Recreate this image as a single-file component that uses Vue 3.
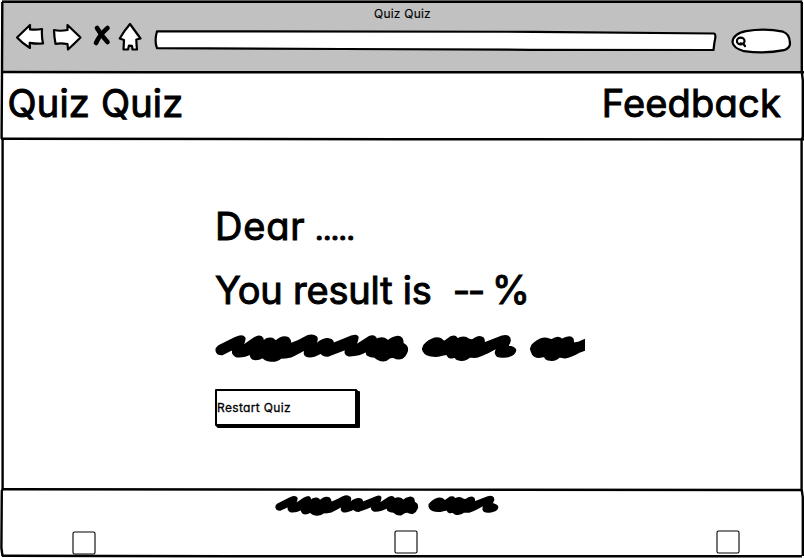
<script setup>
const wordOne =
  'M6 50Q5 43 12 38L62 13Q82 4 87 13Q89 19 80 35L88 35L116 16Q136 3 141 14Q143 19 139 30L155 17Q174 10 181 26Q203 5 219 14Q226 20 224 33Q255 22 276 9Q293 2 303 11Q306 16 300 30L307 31Q326 15 342 17Q354 18 352 32Q384 20 410 9Q429 3 426 14Q425 25 416 36L420 38L462 11Q479 3 483 19Q505 7 519 24Q530 13 548 10Q562 10 562 30Q578 37 574 52Q569 66 559 71Q548 74 536 67Q524 66 512 77Q496 81 480 67Q466 67 458 61L455 49Q430 64 402 63Q389 60 395 46L390 44Q350 60 338 64Q322 63 319 54Q291 70 276 65Q267 62 273 49L266 46Q240 60 228 66Q211 70 196 70Q186 80 168 79Q149 77 144 67Q126 77 115 73Q107 69 109 56Q86 68 66 66Q51 61 57 46L50 45L22 59Q8 60 6 50Z'
const wordTwo =
  'M627 50Q622 39 634 30Q657 10 676 16L687 26L710 10Q725 6 725 19Q747 6 760 18L772 21Q793 4 803 14Q807 20 804 31L862 9Q884 4 883 20Q882 29 873 35Q902 43 899 50Q896 63 874 66Q847 70 845 60Q841 54 849 44L841 41Q808 60 785 67Q773 68 764 66Q750 79 735 76Q723 75 723 66Q698 75 700 58Q685 60 669 64Q634 66 627 50Z'
const wordThree =
  'M951 50Q946 39 958 30Q982 10 1000 17L1010 20Q1031 7 1040 19Q1065 6 1071 15Q1074 20 1071 31L1090 28L1125 12V40L1090 53Q1068 66 1050 69L1033 66Q1020 79 1006 76Q992 76 991 64Q962 72 955 60Z'
const boxes = [0, 1, 2]
</script>

<template>
  <div class="window">
    <header class="chrome">
      <div class="title">Quiz Quiz</div>
      <div class="toolbar">
        <svg class="nav-icons" viewBox="0 0 130 32" width="130" height="32">
          <g class="ink">
            <path d="M1 15.5L14 3V7.5Q21 8 26 7Q25.5 15 27 21.5Q20 22 13.7 20.8L14 26Q6 21 1 15.5Z" />
            <path d="M38 8Q44 9.5 51.5 8L51.5 3L64.5 15.5Q58 22 52 27.5L51.5 22Q45 21 39.5 21.8Q38.2 15 38 8Z" />
            <path d="M114 2Q119 9 124.5 16.5L120.3 17.5Q120.5 23 121 27.5H116.5L116 23.8L113 23.6L112 27.5H107.5L108 18L103.7 16.5Q108 9 114 2Z" />
          </g>
          <path class="cross" d="M81 6Q85 13 91.5 20" />
          <path class="cross" d="M91.5 6Q83.5 13 80 21" />
        </svg>
        <svg class="address" viewBox="0 0 564 22" width="564" height="22">
          <path class="ink" d="M3 2.3L380 2.8L560 4.5Q562.5 5 560.5 13L559.5 21L376 20.8L188 20L3 19.2Q.2 12 3 2.3Z" />
        </svg>
        <svg class="search" viewBox="0 0 62 28" width="62" height="28">
          <path class="ink" d="M15 4.2Q34 1 52 4.7Q58.5 7 58.8 15Q60 21 53 23.2Q34 27 13 24.2Q2 21 1.5 15Q2 7 15 4.2Z" />
          <ellipse class="ink" cx="9.7" cy="14" rx="3.8" ry="3.3" />
          <path class="ink" d="M9.5 16.3L12.5 17L14 19" />
        </svg>
      </div>
    </header>

    <nav class="navbar">
      <span class="brand">Quiz Quiz</span>
      <span class="feedback">Feedback</span>
    </nav>

    <main class="result">
      <p class="greeting"><span class="dear">Dear</span><span class="dots">.....</span></p>
      <p class="score"><span class="lead">You result is</span><span class="dashes">--</span><span class="percent">%</span></p>
      <svg class="scribble" viewBox="0 0 1110 84" width="370" height="28">
        <path :d="wordOne" />
        <path :d="wordTwo" />
        <path :d="wordThree" />
      </svg>
      <button class="restart">Restart Quiz</button>
    </main>

    <footer class="footer">
      <svg class="scribble small" viewBox="0 0 908 84" width="224.4" height="20.8">
        <path :d="wordOne" />
        <path :d="wordTwo" />
      </svg>
      <div class="boxes">
        <svg v-for="i in boxes" :key="i" class="box" viewBox="0 0 24 24" width="24" height="24">
          <rect x="1" y="1" width="22" height="22" rx="1.5" />
        </svg>
      </div>
    </footer>

    <svg class="outline" viewBox="0 0 804 558" width="804" height="558">
      <path d="M2 1.8H802M2 72L150 72.2L804 72.3M2 138.7L400 139.2L804 139.4M2 489.3L400 489.6L802 490M2 555.7L230 556.3L802 556.3" />
      <path d="M2.3 2L2 72L1.6 138L2.6 140V489L1.8 491L1.4 548L2.5 556M801.8 2V72L802.8 80V137L801.6 140V489L802.8 497V556" />
    </svg>
  </div>
</template>

<style>
body {
  margin: 0;
  background: #fff;
}
</style>

<style scoped>
.window {
  position: relative;
  box-sizing: border-box;
  width: 804px;
  height: 558px;
  display: grid;
  grid-template-rows: 72px 67px 351px 68px;
  overflow: hidden;
  color: #000;
  background: #fff;
  font-family: Inter, "Liberation Sans", sans-serif;
  font-feature-settings: "cv11" 1;
}
.chrome {
  background: #c1c1c1;
  margin: 0 1px 0 2px;
}
.title {
  padding-top: 6px;
  height: 16px;
  line-height: 16px;
  text-align: center;
  font-size: 12px;
  letter-spacing: 0.2px;
  -webkit-text-stroke: 0.15px #000;
}
.toolbar {
  display: flex;
  align-items: flex-start;
  padding-left: 14px;
}
.address {
  margin: 7px 0 0 7.5px;
}
.search {
  margin: 5px 0 0 13px;
}
.ink {
  fill: #fff;
  stroke: #000;
  stroke-width: 2.2;
  stroke-linejoin: round;
  stroke-linecap: round;
}
.cross {
  fill: none;
  stroke: #000;
  stroke-width: 4.6;
  stroke-linecap: round;
}
.navbar {
  display: flex;
  justify-content: space-between;
  padding: 7px 23px 0 7.5px;
  font-size: 38px;
  line-height: 48px;
  -webkit-text-stroke: 1px #000;
}
.brand {
  letter-spacing: 0.2px;
}
.feedback {
  letter-spacing: 0.2px;
}
.result {
  display: flex;
  flex-direction: column;
  align-items: flex-start;
  padding: 63px 0 0 215px;
}
.greeting,
.score {
  display: flex;
  margin: 0;
  height: 48px;
  line-height: 48px;
  font-size: 38px;
  -webkit-text-stroke: 1px #000;
}
.dear {
  letter-spacing: 0.8px;
}
.dots {
  margin-left: 9.5px;
  padding-top: 3px;
  font-size: 31px;
  letter-spacing: -1.1px;
}
.score {
  margin-top: 16px;
}
.lead {
  letter-spacing: -0.2px;
}
.dashes {
  margin: 0 9px 0 21px;
  letter-spacing: -2.5px;
}
.percent {
  font-size: 39px;
}
.scribble {
  display: block;
  margin-top: 20px;
  fill: #000;
  stroke: #000;
  stroke-width: 9;
  stroke-linejoin: round;
}
.restart {
  box-sizing: border-box;
  width: 142px;
  height: 37px;
  margin: 27px 0 0;
  padding: 0 0 1px;
  border: 2px solid #000;
  border-radius: 1px;
  background: #fff;
  box-shadow: 1px 1px 0 #000, 2px 2px 0 #000, 3px 2px 0 #000;
  color: #000;
  font-family: inherit;
  font-size: 12px;
  font-feature-settings: inherit;
  letter-spacing: 0.35px;
  text-align: left;
  -webkit-text-stroke: 0.3px #000;
}
.footer {
  display: flex;
  flex-direction: column;
}
.scribble.small {
  margin: 5px 0 0 275px;
}
.boxes {
  display: flex;
  justify-content: space-between;
  margin-top: 14px;
  padding: 0 64px 0 72px;
}
.box {
  display: block;
  fill: #fff;
  stroke: #000;
  stroke-width: 1.1;
}
.box:first-child {
  margin-top: 1px;
}
.outline {
  position: absolute;
  inset: 0;
  fill: none;
  stroke: #000;
  stroke-width: 2.4;
  pointer-events: none;
}
</style>
